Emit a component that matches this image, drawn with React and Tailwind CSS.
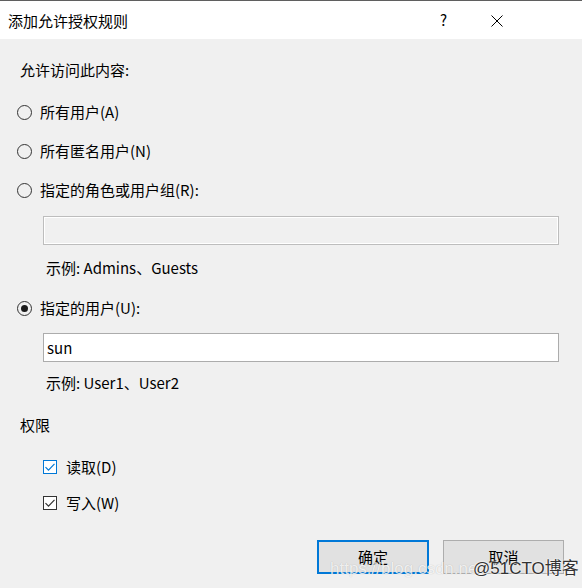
import React from "react";

const font = { fontFamily: '"Noto Sans CJK SC", "Microsoft YaHei", sans-serif' };

function Radio({ checked }) {
  return (
    <span className="w-[15px] h-[15px] rounded-full border border-[#333333] bg-[#f0f0f0] flex items-center justify-center shrink-0">
      {checked && <span className="w-[7px] h-[7px] rounded-full bg-[#1a1a1a]" />}
    </span>
  );
}

function Check({ blue }) {
  const c = blue ? "#0078d7" : "#333333";
  return (
    <span
      className={`w-[14px] h-[14px] border flex items-center justify-center shrink-0 bg-white ${blue ? "border-[#0078d7]" : "border-[#333333]"}`}
    >
      <svg width="12" height="12" viewBox="0 0 12 12">
        <path d="M1.5 6.2 L4.5 9.2 L10.5 2.8" fill="none" stroke={c} strokeWidth="1.2" />
      </svg>
    </span>
  );
}

export default function App() {
  return (
    <div className="relative w-[582px] h-[588px] bg-[#f0f0f0] overflow-hidden text-black" style={font}>
      <div className="h-[39px] bg-white border-t border-[#5f5f5f] flex items-center relative">
        <span className="pl-[8px] text-[15px] leading-[20px] mt-[1px]">添加允许授权规则</span>
        <span className="absolute left-[440px] top-[9px] text-[15px] leading-[20px]">?</span>
        <svg className="absolute left-[491px] top-[14px]" width="12" height="12" viewBox="0 0 12 12">
          <path d="M0.5 0.5 L11.5 11.5 M11.5 0.5 L0.5 11.5" stroke="#000" strokeWidth="1" fill="none" />
        </svg>
      </div>

      <div className="flex flex-col text-[15px] leading-[20px]">
        <div className="pl-[20px] mt-[21px]">允许访问此内容:</div>

        <div className="flex items-center pl-[17px] mt-[22px] gap-[8px]">
          <Radio />
          <span>所有用户(A)</span>
        </div>
        <div className="flex items-center pl-[17px] mt-[19px] gap-[8px]">
          <Radio />
          <span>所有匿名用户(N)</span>
        </div>
        <div className="flex items-center pl-[17px] mt-[19px] gap-[8px]">
          <Radio />
          <span>指定的角色或用户组(R):</span>
        </div>
        <div className="ml-[43px] mt-[16px] w-[516px] h-[29px] border border-[#bdbdbd] shadow-[inset_0_0_0_1px_#ffffff] bg-[#f0f0f0]" />
        <div className="pl-[46px] mt-[13px]">示例: Admins、Guests</div>

        <div className="flex items-center pl-[17px] mt-[20px] gap-[8px]">
          <Radio checked />
          <span>指定的用户(U):</span>
        </div>
        <div className="ml-[43px] mt-[15px] w-[516px] h-[29px] border border-[#acacac] bg-white flex items-center pl-[3px]">
          sun
        </div>
        <div className="pl-[46px] mt-[11px]">示例: User1、User2</div>

        <div className="pl-[20px] mt-[22px]">权限</div>

        <div className="flex items-center pl-[43px] mt-[22px] gap-[9px]">
          <Check blue />
          <span>读取(D)</span>
        </div>
        <div className="flex items-center pl-[43px] mt-[16px] gap-[9px]">
          <Check />
          <span>写入(W)</span>
        </div>

        <div className="flex mt-[27px] pl-[317px] gap-[14px]">
          <div className="w-[112px] h-[34px] border-2 border-[#0078d7] bg-[#e1e1e1] flex items-center justify-center">
            确定
          </div>
          <div className="w-[121px] h-[34px] border border-[#adadad] bg-[#e1e1e1] flex items-center justify-center">
            取消
          </div>
        </div>
      </div>

      <div
        className="absolute left-[330px] top-[558px] text-[17px] leading-[22px] text-white/80 whitespace-nowrap"
        style={{ fontFamily: '"Liberation Sans", Arial, sans-serif', textShadow: "0 0 1px rgba(0,0,0,0.25)" }}
      >
        https://blog.csdn.net/
      </div>
      <div
        className="absolute left-[473px] top-[558px] text-[17px] leading-[22px] text-[#333333] whitespace-nowrap"
        style={{ fontFamily: '"Liberation Sans", "Noto Sans CJK SC", sans-serif', textShadow: "0 0 2px #ffffff, 0 0 2px #ffffff" }}
      >
        @51CTO博客
      </div>
    </div>
  );
}
